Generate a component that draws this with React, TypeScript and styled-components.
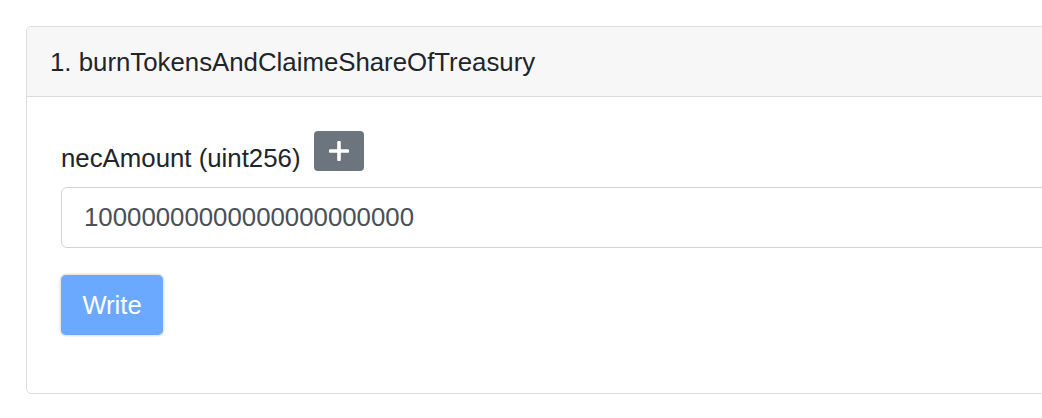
import React from "react";
import styled, { createGlobalStyle } from "styled-components";

const Global = createGlobalStyle`
  html, body {
    margin: 0;
    padding: 0;
    background: #ffffff;
    overflow: hidden;
  }
  body {
    font-family: "Liberation Sans", Arial, Helvetica, sans-serif;
    color: #212529;
  }
  * { box-sizing: border-box; }
`;

const Page = styled.div`
  padding: 26px 0 0 26px;
  width: 1200px;
`;

const Card = styled.div`
  width: 1100px;
  border: 1px solid #dcdcdc;
  border-radius: 5px;
  background: #fff;
  overflow: hidden;
`;

const CardHeader = styled.div`
  background: #f7f7f8;
  border-bottom: 1px solid #d9dadb;
  height: 70px;
  padding: 1px 23px 0;
  display: flex;
  align-items: center;
  font-size: 25.8px;
  line-height: 38px;
  color: #212529;
`;

const CardBody = styled.div`
  padding: 34px 34px 58px 34px;
`;

const ParamRow = styled.div`
  display: flex;
  align-items: flex-start;
  gap: 14px;
  margin-bottom: 10px;
`;

const Label = styled.label`
  font-size: 25.8px;
  line-height: 38.4px;
  padding-top: 8px;
  color: #212529;
`;

const IconButton = styled.button`
  width: 50px;
  height: 40px;
  border: none;
  border-radius: 4px;
  background: #6c757d;
  display: flex;
  align-items: center;
  justify-content: center;
  padding: 0;
  cursor: pointer;
`;

const Input = styled.input`
  display: block;
  width: 100%;
  height: 61px;
  border: 1px solid #ced4da;
  border-radius: 6px;
  padding: 0 20px 0 22px;
  font-family: "Liberation Sans", Arial, Helvetica, sans-serif;
  font-size: 25.8px;
  color: #495057;
  background: #fff;
  outline: none;
  margin-bottom: 27px;
`;

const PrimaryButton = styled.button<{ $disabled?: boolean }>`
  width: 102px;
  height: 60px;
  border: none;
  border-radius: 5px;
  background: ${(p) => (p.$disabled ? "#6aa9ff" : "#007bff")};
  box-shadow: 0 0 0 1.5px #e4e6e8;
  color: #fff;
  font-family: "Liberation Sans", Arial, Helvetica, sans-serif;
  font-size: 25.6px;
  padding: 0;
  cursor: default;
`;

const PlusIcon = () => (
  <svg width="20" height="20" viewBox="0 0 20 20" aria-hidden="true">
    <path d="M10 1.5 V18.5 M1.5 10 H18.5" stroke="#ffffff" strokeWidth="3.6" strokeLinecap="round" />
  </svg>
);

export default function App() {
  return (
    <>
      <Global />
      <Page>
        <Card>
          <CardHeader>1. burnTokensAndClaimeShareOfTreasury</CardHeader>
          <CardBody>
            <ParamRow>
              <Label>necAmount (uint256)</Label>
              <IconButton type="button">
                <PlusIcon />
              </IconButton>
            </ParamRow>
            <Input defaultValue="10000000000000000000000" />
            <PrimaryButton type="button" $disabled>
              Write
            </PrimaryButton>
          </CardBody>
        </Card>
      </Page>
    </>
  );
}
